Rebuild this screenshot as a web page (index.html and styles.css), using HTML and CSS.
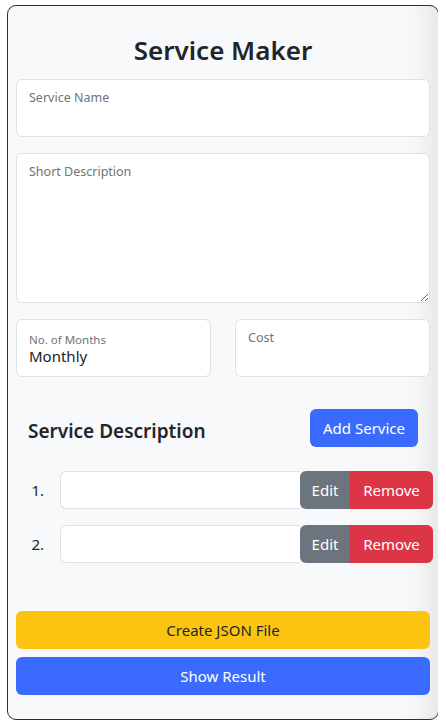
FILE: index.html
```html
<!DOCTYPE html>
<html>
<head>
<meta charset="utf-8">
<link rel="stylesheet" href="styles.css">
</head>
<body>
<div class="card">
  <h1 class="title">Service Maker</h1>
  <div class="field">
    <input class="control" type="text">
    <label class="flabel">Service Name</label>
  </div>
  <div class="field field-area">
    <textarea class="control area"></textarea>
    <label class="flabel">Short Description</label>
  </div>
  <div class="pair">
    <div class="field select">
      <label class="flabel small">No. of Months</label>
      <div class="value">Monthly</div>
    </div>
    <div class="field">
      <input class="control" type="text">
      <label class="flabel">Cost</label>
    </div>
  </div>
  <div class="section-head">
    <h2 class="subtitle">Service Description</h2>
    <button class="btn btn-blue add">Add Service</button>
  </div>
  <ol class="list">
    <li class="item">
      <span class="num">1.</span>
      <div class="group">
        <input class="ginput" type="text">
        <button class="btn btn-gray gbtn">Edit</button>
        <button class="btn btn-red gbtn last">Remove</button>
      </div>
    </li>
    <li class="item">
      <span class="num">2.</span>
      <div class="group">
        <input class="ginput" type="text">
        <button class="btn btn-gray gbtn">Edit</button>
        <button class="btn btn-red gbtn last">Remove</button>
      </div>
    </li>
  </ol>
  <div class="actions">
    <button class="btn btn-yellow wide">Create JSON File</button>
    <button class="btn btn-blue wide">Show Result</button>
  </div>
</div>
</body>
</html>
```

FILE: styles.css
```css
* { box-sizing: border-box; }
html, body { background: #fff; }
body {
  margin: 5px 8px 0 7px;
  font-family: "Noto Sans", "Open Sans", sans-serif;
  color: #212529;
}
.card {
  width: 432px;
  height: 715px;
  border: 1px solid #2b2f33;
  border-radius: 9px;
  background: #f8f9fa;
  padding: 0 8px;
  box-shadow: inset -34px 0 30px -26px rgba(0,0,0,0.09);
}
.title {
  margin: 27px 0 12px;
  font-size: 26px;
  font-weight: 600;
  line-height: 34px;
  text-align: center;
}
.field {
  position: relative;
  height: 58px;
  margin-bottom: 16px;
  background: #fff;
  border: 1px solid #dee2e6;
  border-radius: 6px;
}
.field-area { height: 150px; }
.control {
  display: block;
  width: 100%;
  height: 100%;
  border: 0;
  border-radius: 6px;
  background: transparent;
  outline: none;
  font: inherit;
  padding: 0;
}
.area { resize: vertical; }
.flabel {
  position: absolute;
  left: 12px;
  top: 10px;
  font-size: 12.5px;
  line-height: 16px;
  color: #6e7378;
  pointer-events: none;
}
.flabel.small { top: 13px; font-size: 11.5px; line-height: 14px; }
.select .value {
  position: absolute;
  left: 12px;
  top: 27px;
  font-size: 15px;
  line-height: 18px;
  color: #212529;
}
.pair {
  display: grid;
  grid-template-columns: 195px 195px;
  column-gap: 24px;
  margin-bottom: 32px;
}
.pair .field { margin-bottom: 0; }
.section-head {
  display: flex;
  align-items: center;
  justify-content: space-between;
  padding: 0 12px;
  height: 38px;
}
.subtitle {
  margin: 5px 0 0;
  font-size: 19px;
  font-weight: 600;
}
.btn {
  border: 0;
  font: inherit;
  font-size: 15px;
  color: #fff;
  cursor: pointer;
  padding: 0 12px;
  height: 38px;
  white-space: nowrap;
}
.btn-blue { background: #3b6bfe; }
.btn-gray { background: #6c757d; }
.btn-red { background: #dc3545; }
.btn-yellow { background: #fcc410; color: #212529; }
.add { width: 108px; padding: 0; border-radius: 6px; }
.list {
  list-style: none;
  margin: 24px 0 0;
  padding: 0;
  display: flex;
  flex-direction: column;
  gap: 16px;
}
.item {
  display: flex;
  align-items: center;
  margin-right: -3px;
}
.num {
  width: 28px;
  text-align: right;
  font-size: 15px;
  margin-right: 16px;
}
.group {
  flex: 1;
  display: flex;
  height: 38px;
}
.ginput {
  flex: 1;
  min-width: 0;
  border: 1px solid #dee2e6;
  border-right: 0;
  border-radius: 6px 0 0 6px;
  background: #fff;
  outline: none;
}
.gbtn { border-radius: 0; }
.gbtn.btn-gray { width: 50px; padding: 0; border-radius: 6px 0 0 6px; }
.gbtn.last { width: 83px; padding: 0; border-radius: 0 6px 6px 0; }
.actions {
  margin-top: 48px;
  display: flex;
  flex-direction: column;
  gap: 8px;
}
.wide { width: 100%; border-radius: 6px; }
```
